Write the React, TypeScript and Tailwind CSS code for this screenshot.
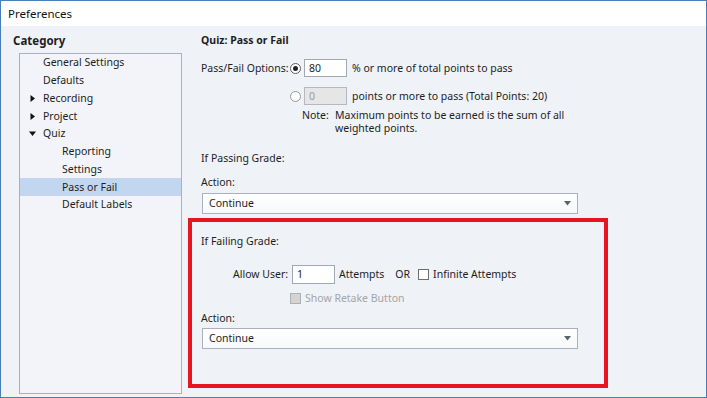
import React from "react";

const font = { fontFamily: '"Noto Sans", "Open Sans", sans-serif' };

function Arrow({ open }: { open?: boolean }) {
  return (
    <svg width="7" height="7" viewBox="0 0 7 7" className="shrink-0">
      {open ? <path d="M0 1.5 L7 1.5 L3.5 6 Z" fill="#111" /> : <path d="M1.5 0 L6 3.5 L1.5 7 Z" fill="#111" />}
    </svg>
  );
}

const tree: { label: string; level: number; arrow?: "open" | "closed"; selected?: boolean }[] = [
  { label: "General Settings", level: 0 },
  { label: "Defaults", level: 0 },
  { label: "Recording", level: 0, arrow: "closed" },
  { label: "Project", level: 0, arrow: "closed" },
  { label: "Quiz", level: 0, arrow: "open" },
  { label: "Reporting", level: 1 },
  { label: "Settings", level: 1 },
  { label: "Pass or Fail", level: 1, selected: true },
  { label: "Default Labels", level: 1 },
];

function Dropdown({ value }: { value: string }) {
  return (
    <div className="flex h-[21px] w-[376px] items-center justify-between border border-[#aab0bd] bg-gradient-to-b from-white to-[#f7f8fa] pl-[6px] pr-[6px]">
      <span>{value}</span>
      <svg width="7" height="5" viewBox="0 0 7 5">
        <path d="M0 0 L7 0 L3.5 4.5 Z" fill="#5a6372" />
      </svg>
    </div>
  );
}

export default function App() {
  return (
    <div
      style={font}
      className="flex h-[398px] w-[707px] flex-col border border-[#4a7ebb] bg-[#eff2f7] text-[10.5px] leading-[13px] whitespace-nowrap text-[#1e1e1e]"
    >
      <div className="flex h-[25px] shrink-0 items-center bg-white pl-[7px] text-[11.5px] text-[#111]">Preferences</div>
      <div className="flex min-h-0 flex-1">
        {/* category tree */}
        <div className="flex w-[187px] shrink-0 flex-col pl-[12px]">
          <div className="mt-[8px] h-[13px] text-[11.5px] font-bold">Category</div>
          <div className="mt-[6px] mb-[3px] ml-[6px] w-[163px] flex-1 border border-[#a9b0c0] bg-[#f2f4f9]">
            {tree.map((t) => (
              <div
                key={t.label}
                className={`flex h-[17.75px] items-center ${t.selected ? "bg-[#c3d6ef]" : ""}`}
              >
                <div className="flex w-[23px] shrink-0 justify-center pl-[1px]">
                  {t.arrow && <Arrow open={t.arrow === "open"} />}
                </div>
                <span className={t.level === 1 ? "pl-[19px]" : ""}>{t.label}</span>
              </div>
            ))}
          </div>
        </div>

        {/* right panel */}
        <div className="flex w-[420px] flex-col">
          <div className="ml-[13px] mt-[8px] h-[13px] font-bold">Quiz: Pass or Fail</div>

          <div className="ml-[13px] mt-[12px] flex h-[18px] items-center">
            <span className="w-[89px]">Pass/Fail Options:</span>
            <span className="flex h-[11px] w-[11px] items-center justify-center rounded-full border border-[#5c5c5c] bg-white">
              <span className="h-[5px] w-[5px] rounded-full bg-[#222]" />
            </span>
            <div className="ml-[3px] flex h-[18px] w-[43px] items-center border border-[#a0a7b5] bg-white pl-[4px]">80</div>
            <span className="ml-[5px]">% or more of total points to pass</span>
          </div>

          <div className="ml-[13px] mt-[10px] flex h-[18px] items-center">
            <span className="w-[89px]" />
            <span className="h-[11px] w-[11px] rounded-full border border-[#9a9a9a] bg-white" />
            <div className="ml-[3px] flex h-[18px] w-[43px] items-center border border-[#b4b8c0] bg-[#e6e6e6] pl-[4px] text-[#9a9a9a]">0</div>
            <span className="ml-[5px]">points or more to pass (Total Points: 20)</span>
          </div>

          <div className="ml-[114px] mt-[4px] flex">
            <span className="w-[33px] shrink-0">Note:</span>
            <span className="w-[230px] whitespace-normal">Maximum points to be earned is the sum of all weighted points.</span>
          </div>

          <div className="ml-[13px] mt-[17px]">If Passing Grade:</div>
          <div className="ml-[13px] mt-[11px]">Action:</div>
          <div className="ml-[14px] mt-[4px]">
            <Dropdown value="Continue" />
          </div>

          <div className="mt-[4px] flex h-[170px] flex-col border-[4px] border-[#e8141f] pl-[9px]">
            <div className="mt-[13px]">If Failing Grade:</div>
            <div className="mt-[17px] ml-[32px] flex h-[19px] items-center">
              <span>Allow User:</span>
              <div className="ml-[4px] flex h-[19px] w-[43px] items-center border border-[#a0a7b5] bg-white pl-[4px]">1</div>
              <span className="ml-[4px]">Attempts</span>
              <span className="ml-[11px]">OR</span>
              <span className="ml-[8px] h-[11px] w-[11px] border border-[#6e6e6e] bg-white" />
              <span className="ml-[4px]">Infinite Attempts</span>
            </div>
            <div className="mt-[8px] ml-[89px] flex items-center text-[#a5a5a5]">
              <span className="h-[11px] w-[11px] border border-[#b0b0b0] bg-[#d4d4d4]" />
              <span className="ml-[4px]">Show Retake Button</span>
            </div>
            <div className="mt-[7px]">Action:</div>
            <div className="ml-[1px] mt-[3px]">
              <Dropdown value="Continue" />
            </div>
          </div>
        </div>
      </div>
    </div>
  );
}
